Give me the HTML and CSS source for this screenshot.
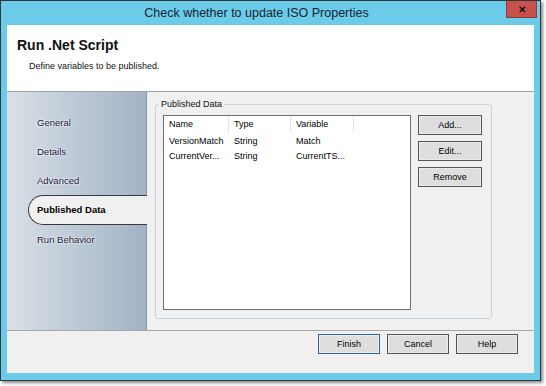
FILE: index.html
```html
<!DOCTYPE html>
<html lang="en">
<head>
    <meta charset="UTF-8">
    <title>Check whether to update ISO Properties</title>
    <link rel="stylesheet" href="styles.css">
</head>
<body>
    <div class="window">
        <div class="titlebar">
            <div class="title">Check whether to update ISO Properties</div>
            <button class="close-btn" aria-label="Close">&#x2715;</button>
        </div>

        <div class="client">
            <header class="header">
                <h1>Run .Net Script</h1>
                <p class="subtitle">Define variables to be published.</p>
            </header>

            <div class="main">
                <nav class="sidebar">
                    <div class="nav-item">General</div>
                    <div class="nav-item">Details</div>
                    <div class="nav-item">Advanced</div>
                    <div class="nav-item active">Published Data</div>
                    <div class="nav-item">Run Behavior</div>
                </nav>

                <div class="content">
                    <fieldset class="group">
                        <legend>Published Data</legend>
                        <div class="group-body">
                            <div class="list">
                                <div class="list-row list-head">
                                    <div class="cell">Name</div>
                                    <div class="cell">Type</div>
                                    <div class="cell">Variable</div>
                                    <div class="cell"></div>
                                </div>
                                <div class="list-row">
                                    <div class="cell">VersionMatch</div>
                                    <div class="cell">String</div>
                                    <div class="cell">Match</div>
                                    <div class="cell"></div>
                                </div>
                                <div class="list-row">
                                    <div class="cell">CurrentVer...</div>
                                    <div class="cell">String</div>
                                    <div class="cell">CurrentTS...</div>
                                    <div class="cell"></div>
                                </div>
                            </div>
                            <div class="side-buttons">
                                <button class="btn">Add...</button>
                                <button class="btn">Edit...</button>
                                <button class="btn">Remove</button>
                            </div>
                        </div>
                    </fieldset>
                </div>
            </div>

            <footer class="footer">
                <button class="btn default">Finish</button>
                <button class="btn">Cancel</button>
                <button class="btn">Help</button>
            </footer>
        </div>
    </div>
</body>
</html>
```

FILE: styles.css
```css
:root {
    --frame: #6bcbe9;
    --face: #f0f0f0;
    --text: #101820;
    --nav-text: #16163a;
    --border: #7a7a7a;
}

* {
    margin: 0;
    padding: 0;
    box-sizing: border-box;
    font-family: 'Liberation Sans', Arial, sans-serif;
}

body {
    background-color: #ffffff;
    width: 546px;
    height: 386px;
    overflow: hidden;
}

.window {
    width: 541px;
    height: 381px;
    display: flex;
    flex-direction: column;
    background-color: var(--frame);
    border: 1px solid #30383c;
    box-shadow: 2px 2px 3px rgba(0, 0, 0, 0.45);
}

/* Title bar */
.titlebar {
    height: 24px;
    display: flex;
    align-items: flex-start;
    padding: 0 3px 0 6px;
}

.title {
    flex: 1;
    text-align: center;
    font-size: 12.5px;
    line-height: 24px;
    color: #132631;
}

.close-btn {
    width: 31px;
    height: 17px;
    border: 1px solid #8e3b38;
    border-top: none;
    background-color: #c9514d;
    color: #111;
    font-size: 10px;
    font-weight: bold;
    line-height: 15px;
    cursor: pointer;
}

/* Client area */
.client {
    flex: 1;
    margin: 0 6px 7px 6px;
    display: flex;
    flex-direction: column;
    background-color: var(--face);
}

.header {
    height: 67px;
    background-color: #ffffff;
    padding: 12px 0 0 10px;
    border-bottom: 1px solid #a0a0a0;
}

.header h1 {
    font-size: 14px;
    line-height: 17px;
    font-weight: bold;
    color: #111;
}

.subtitle {
    font-size: 9px;
    line-height: 12px;
    margin: 6px 0 0 12px;
    color: #111;
}

.main {
    height: 239px;
    display: flex;
    border-bottom: 1px solid #a8a8a8;
}

/* Sidebar */
.sidebar {
    width: 140px;
    padding-top: 16px;
    background: linear-gradient(to right, #d9e0e7, #a2b2c5);
    border-right: 1px solid #8a9aae;
}

.nav-item {
    height: 29px;
    line-height: 29px;
    padding-left: 30px;
    font-size: 9.5px;
    color: var(--nav-text);
    text-shadow: 0 0 3px #ffffff, 0 0 2px #ffffff;
}

.nav-item.active {
    height: 30px;
    line-height: 28px;
    margin: 0 -1px 0 21px;
    padding-left: 8px;
    font-weight: bold;
    color: #000;
    background-color: var(--face);
    border: 1px solid #3a3a3a;
    border-right: none;
    border-radius: 15px 0 0 15px;
    text-shadow: none;
}

/* Content */
.content {
    flex: 1;
    padding: 6px 0 0 8px;
    background-color: var(--face);
}

.group {
    width: 337px;
    border: 1px solid #c6d3dc;
    border-radius: 3px;
}

.group legend {
    margin-left: 3px;
    padding: 0 2px;
    font-size: 9px;
    line-height: 12px;
    color: #111;
}

.group-body {
    display: flex;
    gap: 7px;
    padding: 5px 0 8px 7px;
}

.list {
    width: 248px;
    height: 195px;
    background-color: #ffffff;
    border: 1px solid #6e6e70;
}

.list-row {
    display: grid;
    grid-template-columns: 65px 62px 63px 1fr;
    height: 15px;
    font-size: 9px;
    line-height: 15px;
    color: #000;
}

.list-head {
    height: 16px;
    line-height: 16px;
    margin-bottom: 2px;
}

.cell {
    padding-left: 5px;
    white-space: nowrap;
    overflow: hidden;
}

.list-head .cell {
    border-right: 1px solid #e3e3e3;
}

.list-head .cell:last-child {
    border-right: none;
}

.side-buttons {
    display: flex;
    flex-direction: column;
    gap: 6px;
}

.btn {
    width: 64px;
    height: 20px;
    font-size: 9px;
    color: #000;
    background-color: #dedede;
    border: 1px solid #555555;
    box-shadow: inset 0 0 0 1px #ececec;
    cursor: pointer;
}

/* Footer */
.footer {
    flex: 1;
    display: flex;
    justify-content: flex-end;
    align-items: flex-start;
    gap: 7px;
    padding: 3px 16px 0 0;
}

.footer .btn {
    width: 62px;
}

.btn.default {
    border-color: #2d6496;
}
```
